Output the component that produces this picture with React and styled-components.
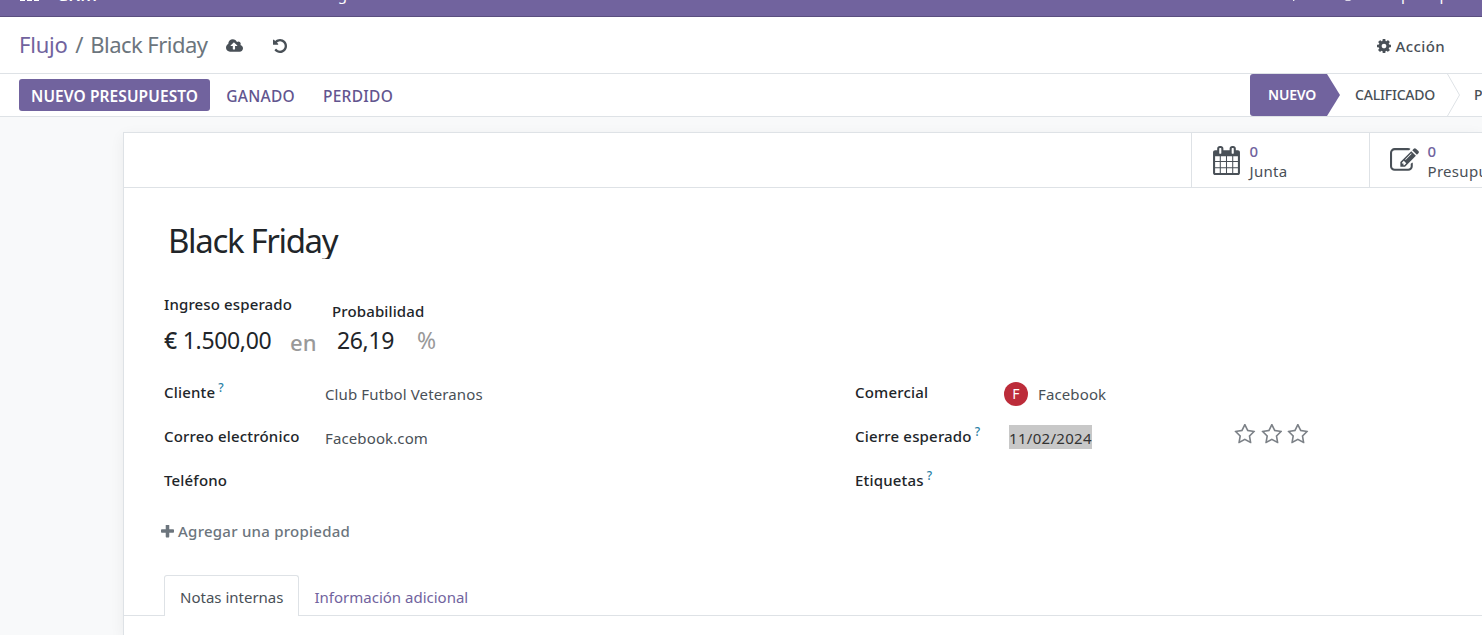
import React from "react";
import styled, { createGlobalStyle } from "styled-components";

const purple = "#71639e";
const line = "#dee2e6";
const gray = "#495057";

const Global = createGlobalStyle`
  * { box-sizing: border-box; }
  body {
    margin: 0;
    background: #f8f9fa;
    color: #212529;
    font-family: "Noto Sans", "Open Sans", sans-serif;
    font-size: 15px;
    overflow: hidden;
  }
  button { font: inherit; border: 0; background: none; padding: 0; }
`;

const Page = styled.div`
  height: 635px;
  display: flex;
  flex-direction: column;
  overflow: hidden;
  white-space: nowrap;
`;

/* Navigation bar, scrolled partly out of view */
const NavBar = styled.nav`
  flex: none;
  height: 17px;
  overflow: hidden;
  background: ${purple};
  border-bottom: 1px solid #5a4f7f;
  color: #fff;
`;
const NavRow = styled.div`
  height: 46px;
  margin-top: -29px;
  padding-left: 20px;
  display: flex;
  align-items: center;
  line-height: 46px;
`;
const Brand = styled.span`
  margin-left: 17px;
  width: 245px;
  font-size: 19px;
  font-weight: 500;
`;
const NavItem = styled.span``;
const Systray = styled.div`
  width: 193px;
  margin-left: auto;
  display: flex;
  align-items: center;
`;
const Company = styled.span`
  margin-left: 46px;
  letter-spacing: -0.3px;
`;
const NavIcon = styled.svg`
  display: block;
  flex: none;
  margin-left: ${(p) => p.$gap || 0}px;
`;

/* Breadcrumb */
const ControlPanel = styled.header`
  flex: none;
  height: 57px;
  padding: 0 37px 0 19px;
  display: flex;
  align-items: center;
  background: #fff;
  border-bottom: 1px solid ${line};
`;
const Breadcrumb = styled.div`
  width: 207px;
  display: flex;
  gap: 7.5px;
  padding-bottom: 2px;
  font-size: 22px;
  line-height: 54px;
  letter-spacing: -0.55px;
  color: #6c757d;
`;
const CrumbLink = styled.a`
  color: ${purple};
  letter-spacing: -0.2px;
`;
const IconButton = styled.button`
  display: flex;
  margin-right: ${(p) => p.$gap || 0}px;
  padding-top: 2px;
  color: ${gray};
`;
const ActionButton = styled.button`
  margin-left: auto;
  display: flex;
  align-items: center;
  gap: 4px;
  line-height: 28px;
  padding-top: 1px;
  font-weight: 500;
  letter-spacing: 0.4px;
  color: ${gray};
`;

/* Status bar */
const StatusBar = styled.div`
  flex: none;
  height: 43px;
  padding-left: 19px;
  display: flex;
  justify-content: space-between;
  background: #fff;
  border-bottom: 1px solid ${line};
`;
const Buttons = styled.div`
  display: flex;
  padding-top: 5px;
`;
const StatusButton = styled.button`
  height: 32px;
  line-height: 35px;
  margin-right: 4px;
  padding: 0 12px;
  border-radius: 3px;
  font-size: 15.5px;
  font-weight: ${(p) => (p.$primary ? 600 : 500)};
  letter-spacing: ${(p) => (p.$primary ? 0.09 : 0.28)}px;
  color: ${(p) => (p.$primary ? "#fff" : "#62558f")};
  background: ${(p) => (p.$primary ? purple : "transparent")};
`;
const Stages = styled.div`
  display: flex;
  width: 232.5px;
  overflow: hidden;
`;
const Stage = styled.button`
  flex: none;
  height: 42px;
  line-height: 42px;
  font-size: 14px;
  font-weight: ${(p) => (p.$current ? 600 : 500)};
  letter-spacing: -0.2px;
  text-align: left;
  color: ${(p) => (p.$current ? "#fff" : gray)};
  width: ${(p) => (p.$current ? 90.5 : 92)}px;
  padding-left: ${(p) => (p.$current ? 18.5 : 15)}px;
  ${(p) =>
    p.$current &&
    `background: ${purple};
     border-radius: 3px 0 0 3px;
     clip-path: polygon(0 0, 77.5px 0, 100% 50%, 77.5px 100%, 0 100%);`}
`;
const Chevron = styled.svg`
  flex: none;
  margin: 0 -1px 0 15px;
  width: 13px;
  height: 42px;
`;

/* Sheet */
const Canvas = styled.main`
  flex: 1;
  padding: 15px 0 0 123px;
  display: flex;
`;
const Sheet = styled.section`
  flex: 1;
  min-width: 0;
  background: #fff;
  border: 1px solid ${line};
  border-width: 1px 0 0 1px;
  box-shadow: 0 4px 14px rgba(0, 0, 0, 0.06);
`;
const StatRow = styled.div`
  height: 55px;
  display: flex;
  justify-content: flex-end;
  border-bottom: 1px solid ${line};
`;
const Stat = styled.button`
  width: ${(p) => p.$w}px;
  flex: none;
  overflow: hidden;
  display: flex;
  align-items: center;
  padding-left: 20px;
  text-align: left;
  border-left: 1px solid ${line};
  color: ${gray};
`;
const StatText = styled.span`
  display: flex;
  flex-direction: column;
  margin-left: 8.5px;
  padding-top: 2px;
  line-height: 20px;
  letter-spacing: 0.3px;
`;
const StatValue = styled.span`
  color: ${purple};
  font-weight: 500;
`;
const SheetBody = styled.div`
  padding: 30px 0 0 40px;
`;
const Title = styled.h1`
  margin: 0 0 31px;
  padding-left: 4px;
  height: 41px;
  overflow: hidden;
  font-size: 33px;
  line-height: 46px;
  letter-spacing: -1.35px;
  font-weight: 400;
`;
const Metrics = styled.div`
  display: flex;
  height: 80px;
`;
const Metric = styled.div`
  width: ${(p) => p.$w || "auto"};
  padding-top: ${(p) => p.$top || 0}px;
`;
const MetricLabel = styled.div`
  line-height: 28px;
  font-weight: 500;
  letter-spacing: 0.13px;
`;
const MetricValue = styled.div`
  display: flex;
  gap: ${(p) => p.$gap}px;
  padding-left: ${(p) => p.$pad || 0}px;
  font-size: 23px;
  line-height: ${(p) => p.$lh}px;
  letter-spacing: -0.35px;
`;
const Currency = styled.span`
  font-weight: 500;
`;
const Muted = styled.span`
  color: #999;
`;
const Joiner = styled.div`
  width: 42px;
  padding-top: 36px;
  line-height: 32px;
  font-size: 22px;
  font-weight: 500;
  color: #999;
`;
const Groups = styled.div`
  display: grid;
  grid-template-columns: 691px 1fr;
`;
const Field = styled.div`
  display: flex;
  height: 44px;
  line-height: 44px;
`;
const Label = styled.label`
  width: ${(p) => p.$w}px;
  font-weight: 500;
  letter-spacing: 0.18px;
`;
const Help = styled.sup`
  margin-left: 3px;
  font-size: 12px;
  font-weight: 500;
  line-height: 0;
  vertical-align: 6px;
  color: #2a7fa5;
`;
const Value = styled.div`
  display: flex;
  align-items: center;
  padding-top: 4px;
  letter-spacing: 0.12px;
  color: ${gray};
`;
const Avatar = styled.span`
  width: 24px;
  height: 24px;
  margin-right: 10px;
  border-radius: 50%;
  background: #bc2c3a;
  color: #fff;
  font-size: 14px;
  line-height: 24px;
  text-align: center;
`;
const Selected = styled.span`
  width: 83px;
  margin: -2px 0 0 5px;
  height: 24px;
  line-height: 27px;
  background: #c8c8c8;
  color: #333;
  letter-spacing: 0.3px;
`;
const Stars = styled.div`
  display: flex;
  gap: 5px;
  margin: 10px 0 0 142px;
  color: #7c8187;
`;
const AddProperty = styled.button`
  display: flex;
  align-items: center;
  gap: 4px;
  margin: 15px 0 0 -3px;
  line-height: 28px;
  font-weight: 500;
  letter-spacing: 0.25px;
  color: #6c757d;
`;
const Tabs = styled.div`
  display: flex;
  height: 41px;
  margin: 30px 0 0 -40px;
  padding-left: 40px;
  border-bottom: 1px solid ${line};
`;
const Tab = styled.button`
  height: 41px;
  line-height: ${(p) => (p.$active ? 42 : 44)}px;
  padding: 0 15px;
  color: ${(p) => (p.$active ? gray : purple)};
  ${(p) =>
    p.$active &&
    `border: 1px solid ${line};
     border-bottom: 0;
     border-radius: 3px 3px 0 0;
     background: #fff;`}
`;

const Glyph = styled.svg`
  display: block;
  flex: none;
  fill: currentColor;
`;
const paths = {
  cloud:
    "M1280 864q0-14-9-23l-352-352q-9-9-23-9t-23 9l-351 351q-10 12-10 24 0 14 9 23t23 9h224v352q0 13 9.500 22.500t22.500 9.500h192q13 0 22.500-9.500t9.500-22.500v-352h224q13 0 22.500-9.500t9.500-22.500zm640 288q0 159-112.500 271.500t-271.500 112.500h-1088q-185 0-316.500-131.500t-131.500-316.500q0-130 70-240t188-165q-2-30-2-43 0-212 150-362t362-150q156 0 285.500 87t188.500 231q71-62 166-62 106 0 181 75t75 181q0 76-41 138 130 31 213.500 135.500t83.500 238.500z",
  undo: "M1664 896q0 156-61 298t-164 245-245 164-298 61q-172 0-327-72.500t-264-204.500q-7-10-6.500-22.500t8.500-20.500l137-138q10-9 25-9 16 2 23 12 73 95 179 147t225 52q104 0 198.500-40.500t163.500-109.500 109.500-163.500 40.500-198.500-40.500-198.500-109.500-163.500-163.500-109.500-198.500-40.500q-98 0-188 35.500t-160 101.500l137 138q31 30 14 69-17 40-59 40h-448q-26 0-45-19t-19-45v-448q0-42 40-59 39-17 69 14l130 129q107-101 244.500-156.500t284.500-55.500q156 0 298 61t245 164 164 245 61 298z",
  cog: "M1152 896q0-106-75-181t-181-75-181 75-75 181 75 181 181 75 181-75 75-181zm512-109v222q0 12-8 23t-20 13l-185 28q-19 54-39 91 35 50 107 138 10 12 10 25t-9 23q-27 37-99 108t-94 71q-12 0-26-9l-138-108q-44 23-91 38-16 136-29 186-7 28-36 28h-222q-14 0-24.500-8.500t-11.500-21.500l-28-184q-49-16-90-37l-141 107q-10 9-25 9-14 0-25-11-126-114-165-168-7-10-7-23 0-12 8-23 15-21 51-66.500t54-70.500q-27-50-41-99l-183-27q-13-2-21-12.500t-8-23.500v-222q0-12 8-23t19-13l186-28q14-46 39-92-40-57-107-138-10-12-10-24 0-10 9-23 26-36 98.500-107.500t94.500-71.500q13 0 26 10l138 107q44-23 91-38 16-136 29-186 7-28 36-28h222q14 0 24.500 8.500t11.500 21.500l28 184q49 16 90 37l142-107q9-9 24-9 13 0 25 10 129 119 165 170 7 8 7 22 0 12-8 23-15 21-51 66.500t-54 70.500q26 50 41 98l183 28q13 2 21 12.500t8 23.500z",
  calendar:
    "M192 1664h288v-288h-288v288zm352 0h320v-288h-320v288zm-352-352h288v-320h-288v320zm352 0h320v-320h-320v320zm-352-384h288v-288h-288v288zm736 736h320v-288h-320v288zm-384-736h320v-288h-320v288zm768 736h288v-288h-288v288zm-384-352h320v-320h-320v320zm-352-864v-288q0-13-9.500-22.500t-22.500-9.500h-64q-13 0-22.500 9.500t-9.500 22.500v288q0 13 9.500 22.500t22.500 9.500h64q13 0 22.500-9.500t9.500-22.500zm736 864h288v-320h-288v320zm-384-384h320v-288h-320v288zm384 0h288v-288h-288v288zm32-480v-288q0-13-9.500-22.500t-22.500-9.500h-64q-13 0-22.500 9.500t-9.500 22.500v288q0 13 9.500 22.500t22.500 9.500h64q13 0 22.500-9.500t9.500-22.500zm384-64v1280q0 52-38 90t-90 38h-1408q-52 0-90-38t-38-90v-1280q0-52 38-90t90-38h128v-96q0-66 47-113t113-47h64q66 0 113 47t47 113v96h384v-96q0-66 47-113t113-47h64q66 0 113 47t47 113v96h128q52 0 90 38t38 90z",
  edit: "M888 1184l116-116-152-152-116 116v56h96v96h56zm440-720q-16-16-33 1l-350 350q-17 17-1 33t33-1l350-350q17-17 1-33zm80 594v190q0 119-84.500 203.500t-203.500 84.500h-832q-119 0-203.500-84.500t-84.500-203.500v-832q0-119 84.500-203.500t203.500-84.500h832q63 0 117 25 15 7 18 23 3 17-9 29l-49 49q-14 14-32 8-23-6-45-6h-832q-66 0-113 47t-47 113v832q0 66 47 113t113 47h832q66 0 113-47t47-113v-126q0-13 9-22l64-64q15-15 35-7t20 29zm-96-738l288 288-672 672h-288v-288zm444 132l-92 92-288-288 92-92q28-28 68-28t68 28l152 152q28 28 28 68t-28 68z",
  star: "M1201 1004l306-297-422-62-189-382-189 382-422 62 306 297-73 421 378-199 377 199zm527-357q0 22-26 48l-363 354 86 500q1 7 1 20 0 50-41 50-19 0-40-12l-449-236-449 236q-22 12-40 12-21 0-31.500-14.500t-10.500-35.500q0-6 2-20l86-500-364-354q-25-27-25-48 0-37 56-46l502-73 225-455q19-41 49-41t49 41l225 455 502 73q56 9 56 46z",
  plus: "M1600 736v192q0 40-28 68t-68 28h-416v416q0 40-28 68t-68 28h-192q-40 0-68-28t-28-68v-416h-416q-40 0-68-28t-28-68v-192q0-40 28-68t68-28h416v-416q0-40 28-68t68-28h192q40 0 68 28t28 68v416h416q40 0 68 28t28 68z",
};
const Icon = ({ name, w, h, box }) => (
  <Glyph width={w} height={h} viewBox={box}>
    <path d={paths[name]} />
  </Glyph>
);

export default function App() {
  return (
    <Page>
      <Global />
      <NavBar>
        <NavRow>
          <NavIcon width="19" height="14" viewBox="0 0 19 14" fill="#fff">
            {[0, 5, 10].map((y) =>
              [0, 7, 14].map((x) => <rect key={`${x}-${y}`} x={x} y={y} width="5" height="4" />)
            )}
          </NavIcon>
          <Brand>CRM</Brand>
          <NavItem>Configuración</NavItem>
          <Systray>
            <NavIcon width="14" height="14" viewBox="0 0 14 14" fill="#fff">
              <path d="M7 1c4 0 7 2 7 5s-3 5-7 5l-2 3H4l1-3C2 10 0 8 0 6c0-3 3-5 7-5z" />
            </NavIcon>
            <NavIcon $gap="38" width="14" height="14" viewBox="0 0 14 14" fill="none" stroke="#fff" strokeWidth="1.7">
              <circle cx="7" cy="7" r="6" />
              <path d="M7 3v4H4" />
            </NavIcon>
            <Company>presupuesto</Company>
          </Systray>
        </NavRow>
      </NavBar>

      <ControlPanel>
        <Breadcrumb>
          <CrumbLink>Flujo</CrumbLink>
          <span>/</span>
          <span>Black Friday</span>
        </Breadcrumb>
        <IconButton $gap={30}>
          <Icon name="cloud" w={17} h={14} box="0 128 1920 1536" />
        </IconButton>
        <IconButton>
          <Icon name="undo" w={14} h={14} box="128 128 1536 1536" />
        </IconButton>
        <ActionButton>
          <Icon name="cog" w={14} h={14} box="128 128 1536 1536" />
          Acción
        </ActionButton>
      </ControlPanel>

      <StatusBar>
        <Buttons>
          <StatusButton $primary>NUEVO PRESUPUESTO</StatusButton>
          <StatusButton>GANADO</StatusButton>
          <StatusButton>PERDIDO</StatusButton>
        </Buttons>
        <Stages>
          <Stage $current>NUEVO</Stage>
          <Stage>CALIFICADO</Stage>
          <Chevron viewBox="0 0 13 42" fill="none" stroke={line}>
            <path d="M0.500 0L12.500 21L0.500 42" />
          </Chevron>
          <Stage>PROPUESTA</Stage>
        </Stages>
      </StatusBar>

      <Canvas>
        <Sheet>
          <StatRow>
            <Stat $w={178}>
              <Icon name="calendar" w={29} h={29} box="0 0 1792 1792" />
              <StatText>
                <StatValue>0</StatValue>
                <span>Junta</span>
              </StatText>
            </Stat>
            <Stat $w={113}>
              <Icon name="edit" w={29} h={29} box="0 0 1792 1792" />
              <StatText>
                <StatValue>0</StatValue>
                <span>Presupuestos</span>
              </StatText>
            </Stat>
          </StatRow>

          <SheetBody>
            <Title>Black Friday</Title>
            <Metrics>
              <Metric $w="126px">
                <MetricLabel>Ingreso esperado</MetricLabel>
                <MetricValue $lh={44} $gap={6}>
                  <Currency>€</Currency>1.500,00
                </MetricValue>
              </Metric>
              <Joiner>en</Joiner>
              <Metric $top={7}>
                <MetricLabel>Probabilidad</MetricLabel>
                <MetricValue $lh={30} $gap={23} $pad={5}>
                  26,19<Muted>%</Muted>
                </MetricValue>
              </Metric>
            </Metrics>

            <Groups>
              <div>
                <Field>
                  <Label $w={161}>Cliente<Help>?</Help></Label>
                  <Value>Club Futbol Veteranos</Value>
                </Field>
                <Field>
                  <Label $w={161}>Correo electrónico</Label>
                  <Value>Facebook.com</Value>
                </Field>
                <Field>
                  <Label $w={161}>Teléfono</Label>
                </Field>
              </div>
              <div>
                <Field>
                  <Label $w={149}>Comercial</Label>
                  <Value><Avatar>F</Avatar>Facebook</Value>
                </Field>
                <Field>
                  <Label $w={149}>Cierre esperado<Help>?</Help></Label>
                  <Value><Selected>11/02/2024</Selected></Value>
                  <Stars>
                    {[1, 2, 3].map((n) => (
                      <Icon key={n} name="star" w={21.700} h={20} box="32 64 1728 1608" />
                    ))}
                  </Stars>
                </Field>
                <Field>
                  <Label $w={149}>Etiquetas<Help>?</Help></Label>
                </Field>
              </div>
            </Groups>

            <AddProperty>
              <Icon name="plus" w={13} h={13} box="192 192 1408 1408" />
              Agregar una propiedad
            </AddProperty>

            <Tabs>
              <Tab $active>Notas internas</Tab>
              <Tab>Información adicional</Tab>
            </Tabs>
          </SheetBody>
        </Sheet>
      </Canvas>
    </Page>
  );
}
